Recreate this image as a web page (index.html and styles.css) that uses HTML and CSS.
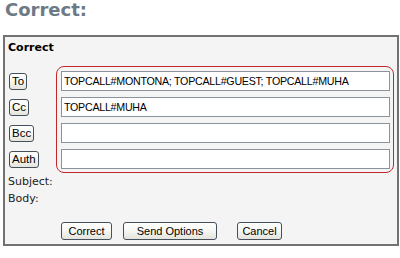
FILE: index.html
```html
<!DOCTYPE html>
<html>
<head>
<meta charset="utf-8">
<link rel="stylesheet" href="styles.css">
</head>
<body>
<h1 class="title">Correct:</h1>
<div class="panel">
  <div class="panel-head">Correct</div>
  <div class="addr">
    <div class="addr-btns">
      <div class="addr-cell"><button class="btn btn-small">To</button></div>
      <div class="addr-cell"><button class="btn btn-small">Cc</button></div>
      <div class="addr-cell"><button class="btn btn-small">Bcc</button></div>
      <div class="addr-cell"><button class="btn btn-small">Auth</button></div>
    </div>
    <div class="addr-box">
      <input class="field" type="text" value="TOPCALL#MONTONA; TOPCALL#GUEST; TOPCALL#MUHA">
      <input class="field" type="text" value="TOPCALL#MUHA">
      <input class="field" type="text" value="">
      <input class="field" type="text" value="">
    </div>
  </div>
  <div class="meta">Subject:</div>
  <div class="meta">Body:</div>
  <div class="actions">
    <button class="btn btn-action btn-correct">Correct</button>
    <button class="btn btn-action btn-options">Send Options</button>
    <button class="btn btn-action btn-cancel">Cancel</button>
  </div>
</div>
</body>
</html>
```

FILE: styles.css
```css
html, body {
  margin: 0;
  padding: 0;
  background: #ffffff;
}

.title {
  margin: 0;
  padding: 0 0 0 5px;
  height: 35px;
  font-family: "DejaVu Sans", Verdana, sans-serif;
  font-weight: bold;
  font-size: 18px;
  line-height: 20px;
  color: #6d7a86;
}

.panel {
  margin: 0 0 0 3px;
  width: 388px;
  border: 2px solid #727272;
  background: #f4f4f4;
  padding: 4px 0 4px 4px;
  font-family: "DejaVu Sans", Verdana, sans-serif;
  font-size: 11px;
  color: #1a1a1a;
}

.panel-head {
  font-weight: bold;
  line-height: 14px;
  color: #000;
  margin: 0 0 11px -1px;
}

.addr {
  display: flex;
}

.addr-btns {
  width: 47px;
  padding-top: 5px;
  display: flex;
  flex-direction: column;
  gap: 6px;
}

.addr-cell {
  height: 20px;
  display: flex;
  align-items: center;
}

.addr-box {
  width: 328px;
  border: 1px solid #c0282d;
  border-radius: 8px;
  padding: 4px 4px 3px 4px;
  display: flex;
  flex-direction: column;
  gap: 6px;
}

.field {
  box-sizing: border-box;
  width: 329px;
  height: 20px;
  margin: 0;
  border: 1px solid #8a929c;
  background: #fff;
  padding: 0 2px;
  font-family: "Liberation Sans", Arial, sans-serif;
  font-size: 10.67px;
  letter-spacing: -0.25px;
  color: #000;
  outline: none;
}

.meta {
  line-height: 17px;
  margin-left: -1px;
  color: #222;
}

.meta:first-of-type {
  margin-top: 1px;
}

.actions {
  display: flex;
  margin: 15px 0 0 52px;
}

.btn {
  box-sizing: border-box;
  font-family: "Liberation Sans", Arial, sans-serif;
  font-size: 11px;
  color: #000;
  border: 1px solid #44505c;
  border-radius: 3px;
  background: linear-gradient(#ffffff 0%, #f6f6f2 50%, #e4e4dc 100%);
  margin: 0;
  cursor: default;
}

.btn-small {
  height: 17px;
  padding: 0 2px;
  line-height: 15px;
  font-size: 11.5px;
}

.btn-action {
  height: 18px;
  padding: 0;
  line-height: 16px;
}

.btn-correct { width: 51px; }
.btn-options { width: 94px; margin-left: 11px; }
.btn-cancel { width: 45px; margin-left: 20px; }
```
